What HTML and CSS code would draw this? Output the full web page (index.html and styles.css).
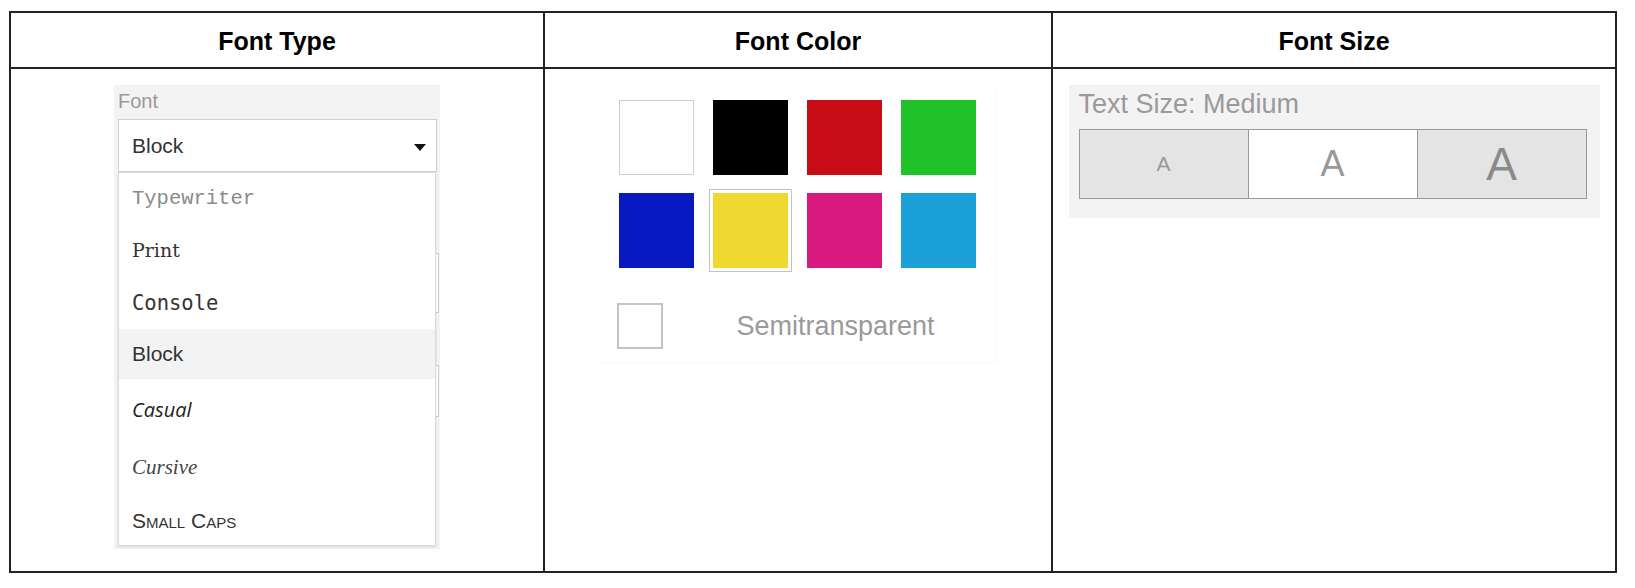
FILE: index.html
```html
<html>
    <head>
        <link rel="stylesheet" href="styles.css">
    </head>
    <body>
        <div class="sheet">
            <div class="head">Font Type</div>
            <div class="head">Font Color</div>
            <div class="head last">Font Size</div>

            <div class="cell">
                <div class="panel font-panel">
                    <div class="label">Font</div>
                    <div class="select">
                        <span>Block</span>
                        <span class="caret"></span>
                    </div>
                    <div class="ghost-field ghost-one"></div>
                    <div class="ghost-field ghost-two"></div>
                    <!-- open menu lies over the fields below -->
                    <ul class="menu">
                        <li class="opt opt-typewriter">Typewriter</li>
                        <li class="opt opt-print">Print</li>
                        <li class="opt opt-console">Console</li>
                        <li class="opt opt-block active">Block</li>
                        <li class="opt opt-casual">Casual</li>
                        <li class="opt opt-cursive">Cursive</li>
                        <li class="opt opt-caps">Small Caps</li>
                    </ul>
                </div>
            </div>

            <div class="cell">
                <div class="color-panel">
                    <div class="swatches">
                        <div class="swatch white"></div>
                        <div class="swatch black"></div>
                        <div class="swatch red"></div>
                        <div class="swatch green"></div>
                        <div class="swatch blue"></div>
                        <div class="swatch yellow selected"></div>
                        <div class="swatch magenta"></div>
                        <div class="swatch cyan"></div>
                    </div>
                    <div class="semi">
                        <div class="checkbox"></div>
                        <span>Semitransparent</span>
                    </div>
                </div>
            </div>

            <div class="cell last">
                <div class="panel size-panel">
                    <div class="size-label">Text Size: Medium</div>
                    <div class="segments">
                        <div class="seg small">A</div>
                        <div class="seg medium current">A</div>
                        <div class="seg large">A</div>
                    </div>
                </div>
            </div>
        </div>
    </body>
</html>
```

FILE: styles.css
```css
* {
    box-sizing: border-box;
}
body {
    margin: 0;
    background: white;
    font-family: "Liberation Sans", Arial, sans-serif;
}
.sheet {
    display: grid;
    grid-template-columns: 534px 508px 562px;
    grid-template-rows: 56px 502px;
    width: 1608px;
    margin: 11px 0 0 9px;
    border: 2px solid #222;
}
.head {
    display: flex;
    align-items: center;
    justify-content: center;
    padding-top: 3px;
    border-right: 2px solid #222;
    border-bottom: 2px solid #222;
    font-size: 25px;
    font-weight: bold;
    color: #000;
}
.cell {
    border-right: 2px solid #222;
    padding-top: 16px;
}
.head.last,
.cell.last {
    border-right: none;
}
.panel {
    background: #f3f3f3;
    margin: 0 auto;
}

/* font type */
.font-panel {
    position: relative;
    width: 326px;
    height: 464px;
    padding: 3px 3px 0 4px;
}
.label {
    font-size: 20px;
    line-height: 26px;
    color: #999;
    margin-bottom: 5px;
}
.select {
    display: flex;
    align-items: center;
    justify-content: space-between;
    height: 53px;
    padding: 0 10px 0 13px;
    background: white;
    border: 1px solid #cfcfcf;
    font-size: 21px;
    color: #333;
}
.caret {
    width: 0;
    height: 0;
    border-left: 6px solid transparent;
    border-right: 6px solid transparent;
    border-top: 7px solid #111;
    margin-top: 3px;
}
.ghost-field {
    width: 321px;
    background: white;
    border: 1px solid #d0d0d0;
}
.ghost-one {
    margin-top: 81px;
    height: 60px;
}
.ghost-two {
    margin-top: 52px;
    height: 52px;
}
.menu {
    position: absolute;
    top: 87px;
    left: 4px;
    width: 318px;
    height: 374px;
    margin: 0;
    padding: 0;
    list-style: none;
    background: white;
    border: 1px solid #dcdcdc;
    box-shadow: 0 1px 2px rgba(0, 0, 0, 0.12);
}
.opt {
    display: flex;
    align-items: center;
    padding-left: 13px;
    color: #333;
}
.opt.active {
    background: #f3f3f3;
}
.opt-typewriter {
    height: 51px;
    font-family: "Liberation Mono", monospace;
    font-size: 20.5px;
    color: #8a8a8a;
}
.opt-print {
    height: 52px;
    font-family: "DejaVu Serif", serif;
    font-size: 19px;
    color: #333;
}
.opt-console {
    height: 53px;
    font-family: "DejaVu Sans Mono", monospace;
    font-size: 20.5px;
}
.opt-block {
    height: 50px;
    font-size: 21px;
}
.opt-casual {
    height: 60px;
    font-family: "Open Sans", sans-serif;
    font-style: italic;
    font-size: 20px;
    color: #222;
}
.opt-cursive {
    height: 56px;
    font-family: "Liberation Serif", serif;
    font-style: italic;
    font-size: 21px;
    color: #444;
}
.opt-caps {
    height: 52px;
    font-variant: small-caps;
    font-size: 21px;
    color: #333;
}

/* font color */
.color-panel {
    width: 397px;
    margin: 0 auto;
    padding: 15px 0 13px 19px;
    border-right: 1px solid #f8f8f8;
    border-bottom: 1px solid #f8f8f8;
}
.swatches {
    display: grid;
    grid-template-columns: repeat(4, 75px);
    gap: 18px 19px;
}
.swatch {
    width: 75px;
    height: 75px;
}
.swatch.selected {
    outline: 1px solid #c2c2c2;
    outline-offset: 3px;
}
.white { background: #fff; border: 1px solid #cfcfcf; }
.black { background: #000; }
.red { background: #c80c16; }
.green { background: #20c22a; }
.blue { background: #0819c2; }
.yellow { background: #efd830; }
.magenta { background: #d91880; }
.cyan { background: #1ca0d8; }
.semi {
    display: flex;
    align-items: center;
    margin: 35px 0 0 -2px;
}
.checkbox {
    width: 46px;
    height: 46px;
    border: 2px solid #c4c4c4;
    background: white;
}
.semi span {
    margin-left: 74px;
    font-size: 27px;
    line-height: 1;
    color: #9a9a9a;
}

/* font size */
.size-panel {
    width: 531px;
    padding: 6px 13px 19px 10px;
}
.size-label {
    font-size: 27px;
    line-height: 27px;
    color: #9a9a9a;
    margin-bottom: 11px;
}
.segments {
    display: flex;
    height: 70px;
    border: 1px solid #999;
}
.seg {
    flex: 1;
    display: flex;
    align-items: center;
    justify-content: center;
    background: #e4e4e4;
    color: #999;
    border-right: 1px solid #999;
}
.seg:last-child {
    border-right: none;
}
.seg.current {
    background: white;
}
.seg.small {
    font-size: 21px;
}
.seg.medium {
    font-size: 36px;
}
.seg.large {
    font-size: 46px;
    color: #8a8a8a;
}
```
